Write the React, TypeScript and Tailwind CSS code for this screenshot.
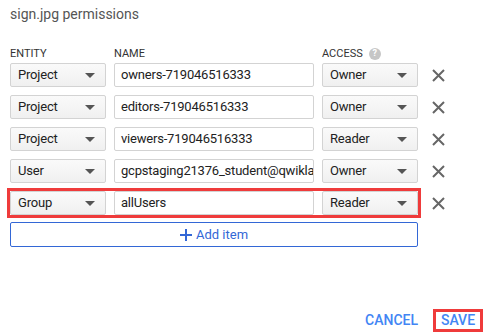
import React from "react";

const rows = [
  { entity: "Project", name: "owners-719046516333", access: "Owner" },
  { entity: "Project", name: "editors-719046516333", access: "Owner" },
  { entity: "Project", name: "viewers-719046516333", access: "Reader" },
  { entity: "User", name: "gcpstaging21376_student@qwiklabs.net", access: "Owner" },
  { entity: "Group", name: "allUsers", access: "Reader", highlight: true },
];

const Caret = () => (
  <svg width="10" height="5" viewBox="0 0 10 5" className="shrink-0">
    <path d="M0 0 L10 0 L5 5 Z" fill="#555" />
  </svg>
);

const Select = ({ value, width }: { value: string; width: string }) => (
  <div
    className={`${width} h-[24px] flex items-center justify-between pl-[7px] pr-[10px] border border-[#d3d3d3] rounded-[2px] bg-gradient-to-b from-[#fafafa] to-[#f0f0f0] text-[#222]`}
  >
    <span>{value}</span>
    <Caret />
  </div>
);

const Close = () => (
  <svg width="13" height="13" viewBox="0 0 13 13" className="ml-[14px]">
    <path d="M1 1 L12 12 M12 1 L1 12" stroke="#666" strokeWidth="2" />
  </svg>
);

export default function App() {
  return (
    <div
      className="w-[483px] h-[334px] bg-white relative text-[13px] tracking-[-0.2px]"
      style={{ fontFamily: "Roboto, 'Liberation Sans', sans-serif" }}
    >
      <div className="pl-[10px] pt-[4px] text-[14px] text-[#555] tracking-normal">
        sign.jpg permissions
      </div>

      <div className="flex pl-[10px] mt-[22px] text-[11px] text-[#333] tracking-normal h-[14px] items-center">
        <div className="w-[104px]">ENTITY</div>
        <div className="w-[208px]">NAME</div>
        <div className="flex items-center gap-[6px]">
          ACCESS
          <span className="w-[12px] h-[12px] rounded-full bg-[#c6c6c6] text-white text-[9px] font-bold flex items-center justify-center">
            ?
          </span>
        </div>
      </div>

      <div className="flex flex-col gap-[8px] mt-[2px] pl-[10px]">
        {rows.map((r) => (
          <div key={r.name} className="flex items-center relative">
            {r.highlight && (
              <div className="absolute left-[-3px] top-[-3px] w-[414px] h-[30px] border-[3px] border-[#ef3b3b]" />
            )}
            <Select value={r.entity} width="w-[96px]" />
            <div className="w-[200px] h-[24px] ml-[8px] border border-[#d3d3d3] rounded-[2px] pl-[6px] flex items-center overflow-hidden whitespace-nowrap text-[#222]">
              {r.name}
            </div>
            <div className="ml-[8px]">
              <Select value={r.access} width="w-[96px]" />
            </div>
            <Close />
          </div>
        ))}
      </div>

      <div className="ml-[10px] mt-[7px] w-[408px] h-[25px] border border-[#3367d6] rounded-[2px] flex items-center justify-center gap-[4px] text-[#3367d6] tracking-normal">
        <svg width="12" height="12" viewBox="0 0 12 12">
          <path d="M6 0 V12 M0 6 H12" stroke="#3367d6" strokeWidth="2" />
        </svg>
        Add item
      </div>

      <div className="absolute right-0 bottom-[2px] flex items-center">
        <span className="text-[#4285f4] text-[14px] font-medium tracking-normal mr-[15px]">CANCEL</span>
        <span className="border-[3px] border-[#ef3b3b] w-[50px] h-[23px] flex items-center justify-center text-[#4285f4] text-[14px] font-medium tracking-normal">
          SAVE
        </span>
      </div>
    </div>
  );
}
